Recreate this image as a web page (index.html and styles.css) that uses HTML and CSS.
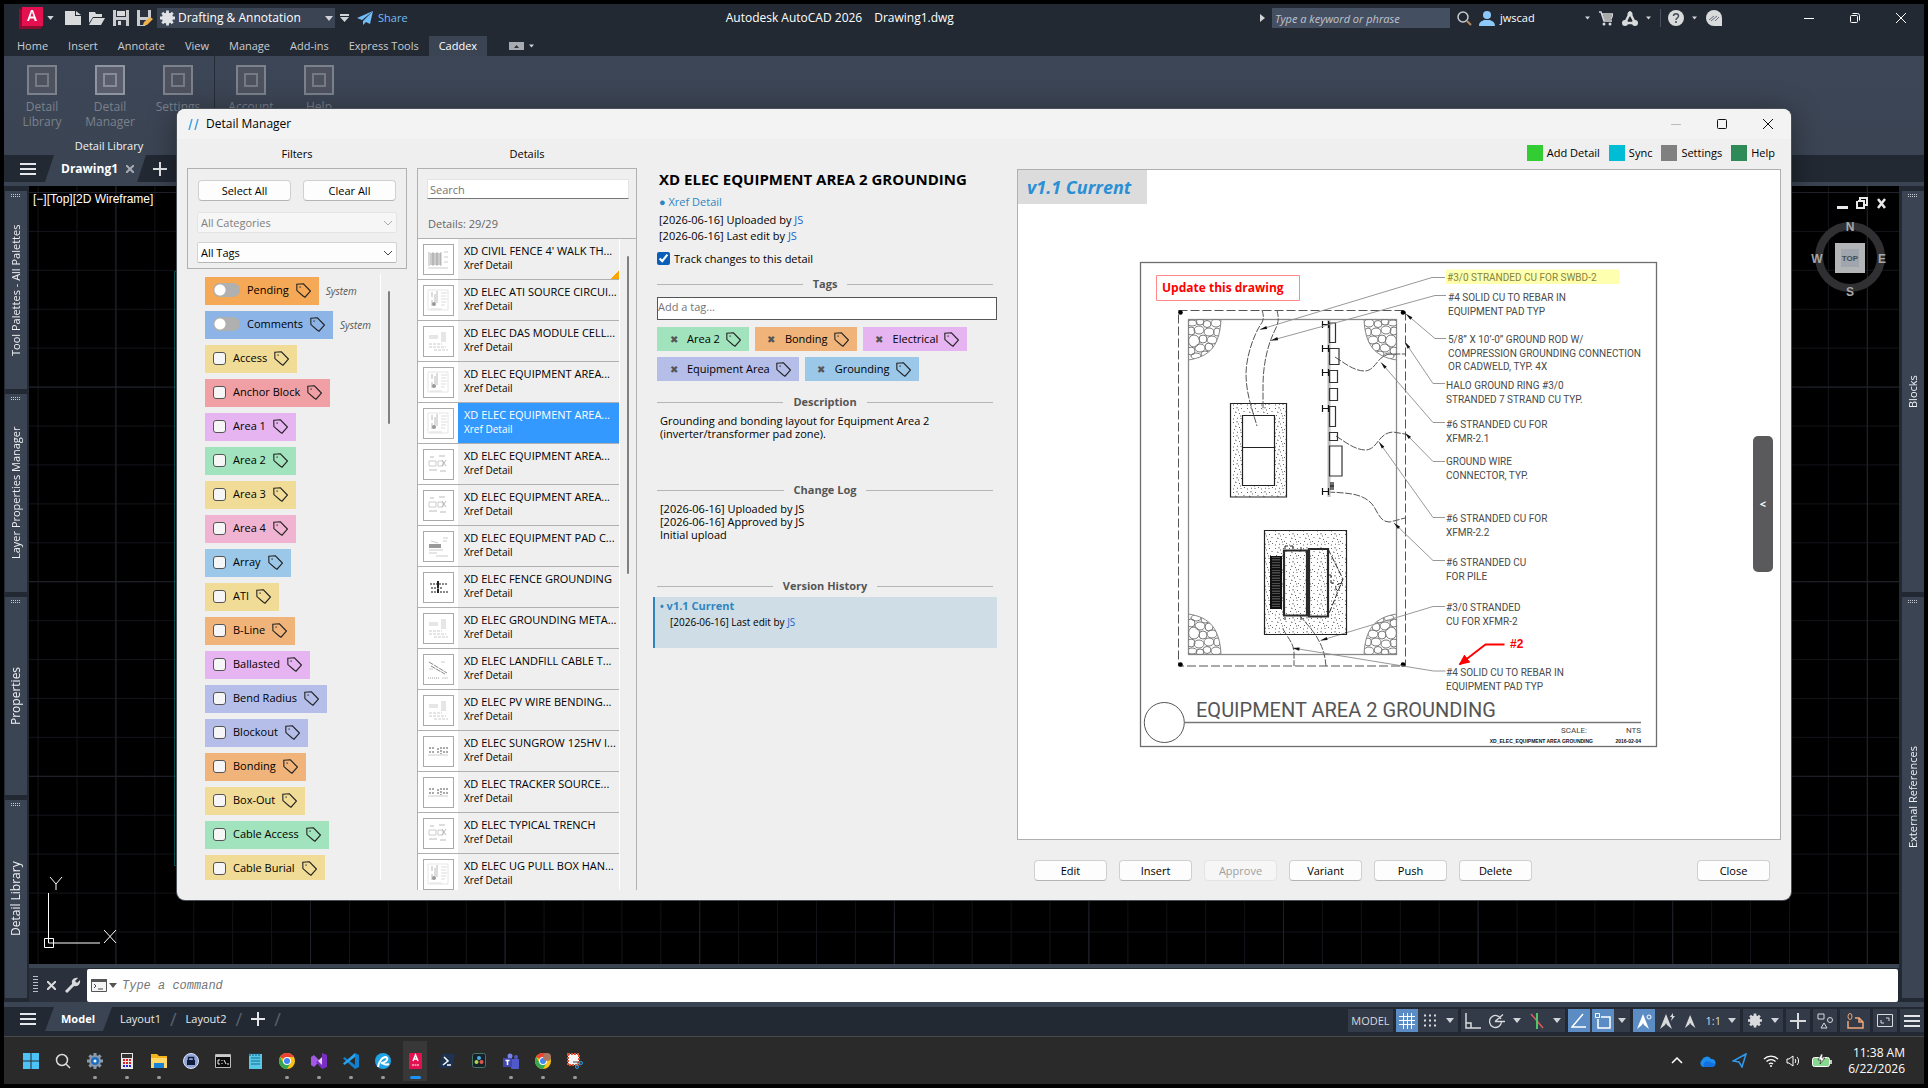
FILE: index.html
```html
<!DOCTYPE html>
<html lang="en">
<head>
<meta charset="utf-8">
<title>Autodesk AutoCAD 2026 - Drawing1.dwg</title>
<link rel="stylesheet" href="styles.css">
</head>
<body>
<svg class="defs" aria-hidden="true">
  <defs>
    <symbol id="tag" viewBox="0 0 15 15"><path d="M.8 1.2 7.4.8l7 7.2L9 14.2l-2.200-1.500L.9 7.600z" fill="none" stroke="#222" stroke-width="1.100"/><rect x="3.500" y="3.500" width="1.200" height="1.200" fill="#222"/></symbol>
    <symbol id="caret" viewBox="0 0 8 5"><path d="M0 0h8L4 5z" fill="#d0d3d8"/></symbol>
    <symbol id="menu" viewBox="0 0 16 12"><path d="M0 1h16M0 6h16M0 11h16" stroke="#e4e6e9" stroke-width="2"/></symbol>
    <symbol id="plus" viewBox="0 0 14 14"><path d="M7 0v14M0 7h14" stroke="#e4e6e9" stroke-width="2"/></symbol>
    <symbol id="gear" viewBox="0 0 16 16"><path d="M8 0v16M0 8h16M2.400 2.400l11.200 11.200M13.600 2.400 2.400 13.600" stroke="currentColor" stroke-width="3"/><circle cx="8" cy="8" r="4" fill="none" stroke="currentColor" stroke-width="4"/></symbol>
    <symbol id="chev" viewBox="0 0 10 6"><path d="m1 1 4 4 4-4" fill="none" stroke="currentColor"/></symbol>
    <symbol id="slot" viewBox="0 0 30 30"><rect x="1" y="1" width="28" height="28" fill="#4e525e" stroke="#7c818c" stroke-width="2"/><rect x="9" y="9" width="12" height="12" fill="none" stroke="#757a85" stroke-width="2"/></symbol>
    <symbol id="chrome" viewBox="0 0 16 16"><circle cx="8" cy="8" r="8" fill="#fbc116"/><path d="M8 8 1.100 4A8 8 0 0 1 15 4H8z" fill="#ea4335"/><path d="M8 8 4.500 10 1.100 4A8 8 0 0 0 8 16l3.500-6z" fill="#34a853"/><circle cx="8" cy="8" r="4" fill="#fff"/><circle cx="8" cy="8" r="3" fill="#4285f4"/></symbol>
    <symbol id="compass" viewBox="0 0 16 16"><path d="m7 1 6 15-5-4-1-2-1 2-5 4z" fill="currentColor"/></symbol>
    <symbol id="t-plan" viewBox="0 0 29 29"><path d="M4 4h20v20H4z" fill="none" stroke="#e6e6e6"/><path d="M8 6v5M13 5v12M8 14v6M11 8v8" stroke="#bbb"/><circle cx="10" cy="18" r="2" fill="#999"/><path d="M17 7h6M17 10h5M17 13h6M17 16h5M17 19h4M6 23h12" stroke="#ddd"/></symbol>
    <symbol id="t-block" viewBox="0 0 29 29"><path d="M6 8h11v12H6z" fill="#ccc"/><path d="M5 7v14M9 7v14M13 7v14M17 7v14" stroke="#888" stroke-width=".6"/><path d="M20 7h4M20 12h4M20 17h4M4 23h20" stroke="#ccc"/></symbol>
    <symbol id="t-notes" viewBox="0 0 29 29"><path d="M5 8h9v4H5zM17 5h5v10h-5z" fill="#e6e6e6"/><path d="M5 17h13M5 20h17M10 23h14" stroke="#ccc" stroke-dasharray="3 1"/></symbol>
    <symbol id="t-parts" viewBox="0 0 29 29"><path d="M5 11h7v5H5zM14 11h5v5h-5z" fill="none" stroke="#ccc"/><path d="m18 10 4 6m-4 0 4-6M6 7h4M15 6h6M5 20h8M16 21h6" stroke="#aaa" stroke-width=".8"/></symbol>
    <symbol id="t-dark" viewBox="0 0 29 29"><path d="M6 11h18M7 15h12M7 19h7M16 19h8" stroke="#888" stroke-width="2" stroke-dasharray="2 1"/><path d="M14 8v7M14 16v4" stroke="#222" stroke-width="2"/></symbol>
    <symbol id="t-diag" viewBox="0 0 29 29"><path d="m5 7 18 11M7 11l14 8" stroke="#888" stroke-dasharray="5 1"/><path d="M4 23h11" stroke="#999" stroke-dasharray="1 1"/><path d="M17 7h4M5 14h4M18 23h6" stroke="#ccc"/></symbol>
    <symbol id="t-row" viewBox="0 0 29 29"><path d="M5 11h6M5 15h6M14 11v6M17 10v7M19 11h5M19 15h5" stroke="#aaa" stroke-width="2" stroke-dasharray="2 1"/><path d="M4 18h20" stroke="#ccc"/></symbol>
    <symbol id="t-pad" viewBox="0 0 29 29"><path d="M5 12h12v4H5z" fill="#999"/><path d="M7 9l7 2M19 6h5M19 9h4M5 18h14M5 21h8M12 24h12" stroke="#ccc"/></symbol>
  </defs>
</svg>

<header class="titlebar">
  <button class="logo" aria-label="Application menu"><svg width="24" height="22" viewBox="0 0 24 22"><path d="M3 3 0 1v21h21l3-3z" fill="#8c0d30"/><path d="M3 0h21v19H3z" fill="#e51050"/><path d="m8 14 4-11h2l4 11h-2.300l-.8-2.500h-4L10 14zm3.500-4.500h3L13 5z" fill="#fff"/></svg></button>
  <svg class="caret" width="7" height="4"><use href="#caret"/></svg>
  <div class="quick">
    <button aria-label="New"><svg width="16" height="14"><path d="M0 0h10v5h6v9H0zM11 0l5 4h-5z" fill="#d9dadc"/></svg></button>
    <button aria-label="Open"><svg width="16" height="14"><path d="M0 1h6l1 2h6v3H4L0 12z" fill="#d9dadc"/><path d="M4 7h12l-4 7H0z" fill="#d9dadc"/></svg></button>
    <button aria-label="Save"><svg width="16" height="16"><path d="M0 0h16v16H0z" fill="#c9cbcf"/><path d="M3 0h10v7H3zM3 10h10v6H3z" fill="#2b323d"/><path d="M4 1h8v5H4zM5 11h3v4H5z" fill="#d9dadc"/></svg></button>
    <button aria-label="Save as"><svg width="16" height="16"><path d="M0 0h14v9l-6 7H0z" fill="#c9cbcf"/><path d="M3 0h8v7H3zM3 10h6v5H3z" fill="#2b323d"/><path d="m6 15 1-3 6-5 3 2-6 6z" fill="#f0b44c"/></svg></button>
  </div>
  <label class="workspace"><svg width="15" height="16"><use href="#gear"/></svg>
    <select aria-label="Workspace"><option>Drafting &amp; Annotation</option></select>
    <svg width="8" height="5"><use href="#caret"/></svg></label>
  <svg class="more" width="9" height="8"><path d="M0 0h9v2H0zM0 3h9L4.500 8z" fill="#d0d3d8"/></svg>
  <a class="share" href="#share"><svg width="16" height="14"><path d="M16 0 0 7l5 2zM16 0 6 10v4l3-3 4 2z" fill="#73bdf7"/></svg>Share</a>
  <h1 class="app-title"><span>Autodesk AutoCAD 2026</span><span>Drawing1.dwg</span></h1>
  <div class="title-right">
    <svg width="5" height="8"><path d="M0 0v8l5-4z" fill="#d0d3d8"/></svg>
    <input class="keyword" type="text" placeholder="Type a keyword or phrase" aria-label="Search help">
    <svg class="mag" width="15" height="15"><circle cx="6" cy="6" r="5" fill="none" stroke="#c9cbcf" stroke-width="1.500"/><path d="m10 10 4 4" stroke="#b98a5e" stroke-width="2"/></svg>
    <button class="user"><svg width="16" height="15"><circle cx="8" cy="4" r="4" fill="#8cc8fb"/><path d="M0 15c0-5 4-5 5-6h6c1 1 5 1 5 6z" fill="#8cc8fb"/></svg>jwscad <svg class="push" width="5" height="4"><use href="#caret"/></svg></button>
    <button aria-label="Store"><svg width="14" height="15"><path d="M0 1h2l3 9h8M3 3h11l-2 5H5z" fill="none" stroke="#d9dadc" stroke-width="1.500"/><path d="M4 3h9l-1 5H5z" fill="#aaa"/><circle cx="5" cy="13" r="1.500" fill="#d9dadc"/><circle cx="11" cy="13" r="1.500" fill="#d9dadc"/></svg></button>
    <button aria-label="Autodesk apps"><svg width="16" height="15"><path d="M8 2 3 12h10z" fill="none" stroke="#d9dadc" stroke-width="2.500"/><circle cx="3" cy="12" r="3" fill="#d9dadc"/><circle cx="13" cy="12" r="3" fill="#d9dadc"/><circle cx="8" cy="3" r="2.500" fill="#d9dadc"/></svg><svg class="cc" width="5" height="4"><use href="#caret"/></svg></button>
    <i class="sep"></i>
    <button aria-label="Help"><svg width="16" height="16"><circle cx="8" cy="8" r="8" fill="#d9dadc"/><path d="M5.500 6c0-3 5-3 5 0 0 2-2.500 2-2.500 4M8 11v2" fill="none" stroke="#444c59" stroke-width="1.500"/></svg><svg class="cc" width="5" height="4"><use href="#caret"/></svg></button>
    <button aria-label="Feedback"><svg width="16" height="16"><path d="M8 0a8 8 0 0 0 0 16h8V8a8 8 0 0 0-8-8z" fill="#d9dadc"/><path d="m3 10 5-4m-3 5 6-5m-2 5 4-4" stroke="#666d78"/></svg></button>
  </div>
  <div class="winctl">
    <button aria-label="Minimize"><svg width="10" height="10"><path d="M0 5.500h10" stroke="#fff"/></svg></button>
    <button aria-label="Restore"><svg width="10" height="10"><rect x=".5" y="2.500" width="7" height="7" rx="1" fill="none" stroke="#fff"/><path d="M2.500.5h5a2 2 0 0 1 2 2v5" fill="none" stroke="#fff"/></svg></button>
    <button aria-label="Close"><svg width="10" height="10"><path d="m0 0 10 10M10 0 0 10" stroke="#fff"/></svg></button>
  </div>
</header>

<nav class="tabs">
  <a href="#home">Home</a><a href="#insert">Insert</a><a href="#annotate">Annotate</a><a href="#view">View</a><a href="#manage">Manage</a><a href="#addins">Add-ins</a><a href="#express">Express Tools</a><a class="on" href="#caddex">Caddex</a>
  <button class="ribmin" aria-label="Minimize ribbon"><svg width="15" height="8"><path d="M0 0h15v8H0z" fill="#a9abb2"/><path d="M5 6h5L7.500 3z" fill="#333"/></svg><svg width="5" height="4"><use href="#caret"/></svg></button>
</nav>

<section class="ribbon">
  <div class="panel">
    <div class="tools">
      <button><svg width="30" height="30"><use href="#slot"/></svg>Detail<br>Library</button>
      <button><svg class="lit" width="30" height="30"><use href="#slot"/></svg>Detail<br>Manager</button>
      <button><svg width="30" height="30"><use href="#slot"/></svg>Settings</button>
    </div>
    <p>Detail Library</p>
  </div>
  <div class="panel second">
    <div class="tools">
      <button><svg width="30" height="30"><use href="#slot"/></svg>Account</button>
      <button><svg width="30" height="30"><use href="#slot"/></svg>Help</button>
    </div>
  </div>
</section>

<nav class="strip-tabs docs">
  <button aria-label="Menu"><svg width="16" height="12"><use href="#menu"/></svg></button>
  <a class="slant" href="#drawing1">Drawing1<svg width="8" height="8"><path d="m0 0 8 8M8 0 0 8" stroke="#a6abb4" stroke-width="2"/></svg></a>
  <button aria-label="New drawing"><svg width="14" height="14"><use href="#plus"/></svg></button>
</nav>

<main class="workarea">
  <aside class="palettes">
    <button>Tool Palettes - All Palettes</button><button>Layer Properties Manager</button><button>Properties</button><button>Detail Library</button>
  </aside>
  <div class="center">
    <div class="canvas">
      <svg class="grid" width="100%" height="100%">
        <defs>
          <pattern id="minor" x="8.600" y="6" width="38.920" height="38.920" patternUnits="userSpaceOnUse"><path d="M0 .5h39M.5 0v39" stroke="#13151a"/></pattern>
          <pattern id="major" x="86.400" y="6" width="194.600" height="194.600" patternUnits="userSpaceOnUse"><path d="M0 .5h195M.5 0v195" stroke="#20232e"/></pattern>
        </defs>
        <rect width="100%" height="100%" fill="url(#minor)"/><rect width="100%" height="100%" fill="url(#major)"/>
        <path d="M160 85.500h-14.500v594H160" fill="none" stroke="#066161"/>
      </svg>
      <p class="vp">[−][Top][2D Wireframe]</p>
      <svg class="ucs" width="74" height="74"><path d="M4.500 17v50H56M.5 62.500h9v9h-9z" fill="none" stroke="#fff"/><path d="m6 1 6 7 6-7M12 8v6M60 54l12 13M72 54 60 67" fill="none" stroke="#fff"/></svg>
      <svg class="cube" width="84" height="104">
        <path d="M22 14h11v3H22z" fill="#e8e8e8"/><path d="M43 9h6v7h-7V9M45 9V6h7v7h-3" fill="none" stroke="#e8e8e8" stroke-width="2"/><path d="m63 7 7 9m0-9-7 9" stroke="#e8e8e8" stroke-width="2.500"/>
        <circle cx="35" cy="65" r="31" fill="none" stroke="#303032" stroke-width="8"/>
        <path d="M20 51h30v30H20z" fill="#b3b4b6"/><path d="M26 57h18v18H26z" fill="#9fa6ad"/>
        <g class="cube-t"><text x="35" y="39">N</text><text x="35" y="104">S</text><text x="2" y="71">W</text><text x="67" y="71">E</text><text class="top" x="35" y="69">TOP</text></g>
      </svg>
    </div>
    <div class="cmd">
      <div class="cmd-tools"><i class="grip"></i>
        <button aria-label="Close command line"><svg width="9" height="9"><path d="m0 0 9 9M9 0 0 9" stroke="#d9dadc" stroke-width="2"/></svg></button>
        <button aria-label="Customize"><svg width="16" height="16"><path d="m1 15 8-8" stroke="#d9dadc" stroke-width="3"/><path d="M8 8C5 5 8 0 13 1l-3 3 2 2 3-3c1 5-4 8-7 5z" fill="#d9dadc"/></svg></button></div>
      <label class="cmd-line"><svg width="16" height="13"><path d="M.5.5h15v12H.5z" fill="#f4f4f4" stroke="#555"/><path d="M0 0h16v3H0z" fill="#555"/><path d="m3 5 2 2-2 2M7 10h5" fill="none" stroke="#444"/></svg><svg width="8" height="5"><path d="M0 0h8L4 5z" fill="#555"/></svg>
        <input type="text" placeholder="Type a command" aria-label="Command"></label>
    </div>
  </div>
  <aside class="palettes right"><button>Blocks</button><button>External References</button></aside>
</main>

<footer class="status">
  <nav class="strip-tabs">
    <button aria-label="Menu"><svg width="16" height="12"><use href="#menu"/></svg></button>
    <a class="slant" href="#model">Model</a><a href="#l1">Layout1</a><i>/</i><a href="#l2">Layout2</a><i>/</i>
    <button aria-label="New layout"><svg width="14" height="14"><use href="#plus"/></svg></button><i>/</i>
  </nav>
  <div class="modes">
    <div class="g"><button class="txt">MODEL</button></div>
    <div class="g">
      <button class="on" aria-label="Grid"><svg width="16" height="16"><path d="M4.500 0v16M8.500 0v16M12.500 0v16M0 3.500h16M0 7.500h16M0 11.500h16" stroke="#fff"/></svg></button>
      <button aria-label="Snap"><svg width="14" height="14"><path d="M1 1.500h13M1 6.500h13M1 11.500h13" stroke="#d9dadc" stroke-width="2" stroke-dasharray="2 3"/></svg></button>
      <button class="n" aria-label="Snap options"><svg width="8" height="5"><use href="#caret"/></svg></button></div>
    <div class="g">
      <button aria-label="Ortho"><svg width="16" height="16"><path d="M1 0v15h15M1 10h5v5" fill="none" stroke="#d9dadc" stroke-width="1.500"/></svg></button>
      <button aria-label="Polar"><svg width="16" height="16"><path d="M12 6A6 6 0 1 0 12.500 9M6 8.500h10M6 8.500l8-7" fill="none" stroke="#d9dadc" stroke-width="1.300"/></svg></button>
      <button class="n" aria-label="Polar options"><svg width="8" height="5"><use href="#caret"/></svg></button>
      <button aria-label="Isoplane"><svg width="14" height="16"><path d="m1 1 12 14" stroke="#e85858" stroke-width="1.500"/><path d="M7 0v16" stroke="#4fc46b" stroke-width="2"/></svg></button>
      <button class="n" aria-label="Isoplane options"><svg width="8" height="5"><use href="#caret"/></svg></button></div>
    <div class="g">
      <button class="on" aria-label="Object tracking"><svg width="16" height="16"><path d="M12 1 1 14h14" fill="none" stroke="#fff" stroke-width="1.500"/></svg></button>
      <button class="on gapped" aria-label="Object snap"><svg width="16" height="16"><path d="M6 4h9v11H3V6" fill="none" stroke="#fff" stroke-width="1.500"/><path d="M.5.5h4v4h-4z" fill="none" stroke="#fff"/></svg></button>
      <button class="n" aria-label="Snap modes"><svg width="8" height="5"><use href="#caret"/></svg></button></div>
    <div class="g">
      <button class="on" aria-label="Annotation visibility"><svg width="16" height="16"><use href="#compass"/><circle cx="13" cy="4" r="2" fill="none" stroke="#fff"/></svg></button>
      <button aria-label="Auto scale"><svg width="16" height="16"><use href="#compass"/><path d="m14 0-3 4h2l-1 4 4-5h-2z" fill="#d9dadc"/></svg></button>
      <button aria-label="Annotation scale"><svg width="14" height="16"><use href="#compass"/></svg></button>
      <button class="txt">1:1</button>
      <button class="n" aria-label="Scale list"><svg width="8" height="5"><use href="#caret"/></svg></button></div>
    <div class="g"><button aria-label="Workspace switching"><svg width="14" height="15"><use href="#gear"/></svg></button><button class="n" aria-label="Workspaces"><svg width="8" height="5"><use href="#caret"/></svg></button></div>
    <div class="g"><button aria-label="Annotation monitor"><svg width="16" height="16"><path d="M8 0v16M0 8h16" stroke="#d9dadc" stroke-width="2"/></svg></button></div>
    <div class="g"><button aria-label="Isolate objects"><svg width="16" height="16"><path d="M1 1h6v5H1zM4 15l3-5 3 5z" fill="none" stroke="#d9dadc"/><circle cx="13" cy="7" r="2.500" fill="none" stroke="#d9dadc"/></svg></button></div>
    <div class="g"><button class="wide" aria-label="Graphics"><svg width="17" height="16"><path d="M1 8v7h15V9l-4-4H8M12 5v4h4" fill="none" stroke="#f2a878" stroke-width="1.500"/><ellipse cx="3" cy="3.500" rx="2" ry="3" fill="none" stroke="#f2a878"/></svg></button></div>
    <div class="g"><button aria-label="Clean screen"><svg width="16" height="13"><path d="M.5.5h15v12H.5zM4 6v3h3M9 4h3v3" fill="none" stroke="#d9dadc"/></svg></button></div>
    <div class="g"><button aria-label="Customization"><svg width="16" height="12"><use href="#menu"/></svg></button></div>
  </div>
</footer>

<nav class="taskbar">
  <div class="apps">
    <button aria-label="Start"><svg width="16" height="16"><path d="M0 0h7.500v7.500H0zM8.500 0H16v7.500H8.500zM0 8.500h7.500V16H0zM8.500 8.500H16V16H8.500z" fill="#4cc2f8"/></svg></button>
    <button aria-label="Search"><svg width="16" height="16"><circle cx="7" cy="7" r="5.500" fill="none" stroke="#ddd" stroke-width="1.500"/><path d="m11 11 4 4" stroke="#ddd" stroke-width="1.500"/></svg></button>
    <button class="run gr" aria-label="Settings"><svg width="16" height="16"><use href="#gear"/><circle cx="8" cy="8" r="4" fill="#1a6fc0"/><circle cx="8" cy="8" r="1.500" fill="#fff"/></svg></button>
    <button class="run" aria-label="Calculator"><svg width="12" height="16"><path d="M0 0h12v16H0z" fill="#e8e8e8"/><path d="M1 1h10v4H1z" fill="#333"/><path d="M2 7h8M2 10h8" stroke="#d22" stroke-width="2" stroke-dasharray="2 1"/><path d="M2 13h8" stroke="#22d" stroke-width="2" stroke-dasharray="2 1"/></svg></button>
    <button class="run" aria-label="File Explorer"><svg width="16" height="16"><path d="M0 1h6l2 2h8v12H0z" fill="#f3b51c"/><path d="M0 5h16v10H0z" fill="#ffd869"/><path d="M3 10h10v5H3z" fill="#1683d8"/></svg></button>
    <button aria-label="Lock"><svg width="16" height="16"><circle cx="8" cy="8" r="7.500" fill="#8fa3d6" stroke="#dfe5f5"/><path d="M4 7h8v5H4z" fill="#111c3a"/><path d="M5.500 7V4.500h5V7" fill="none" stroke="#111c3a" stroke-width="1.500"/></svg></button>
    <button aria-label="Command Prompt"><svg width="16" height="14"><path d="M.5.5h15v13H.5z" fill="#0c0c0c" stroke="#bbb"/><path d="M1 1h14v2H1z" fill="#ccc"/><path d="M5 6H3v4h2M7 6v1M7 9v1M9 6l2 4M12 10h2" fill="none" stroke="#eee"/></svg></button>
    <button aria-label="Notepad"><svg width="13" height="16"><path d="M0 1h13v15H0z" fill="#58c6e6"/><path d="M2 5h9M2 8h9M2 11h9" stroke="#176f94"/><path d="M1 0v3M4 0v3M7 0v3M10 0v3" stroke="#0f5878"/></svg></button>
    <button class="run" aria-label="Chrome"><svg width="16" height="16"><use href="#chrome"/></svg></button>
    <button class="run" aria-label="Visual Studio"><svg width="16" height="16"><path d="m0 4 3-2 9 9V5L3 14l-3-2z" fill="#a259e6"/><path d="m11 0 5 2v12l-5 2-6-7 6-4z" fill="#7a2fc4"/><path d="m11 4-4 4 4 4z" fill="#e4c9fb"/></svg></button>
    <button class="run" aria-label="Code"><svg width="16" height="16"><path d="m12 0 4 2v12l-4 2L0 5.500 1.500 4 12 12z" fill="#1080cf"/><path d="M12 0v4L1.500 12 0 10.500z" fill="#2aa5f2"/></svg></button>
    <button class="run" aria-label="Recorder"><svg width="16" height="16"><circle cx="8" cy="8" r="8" fill="#20a4e6"/><path d="M3 14c1-5 3-9 7-10 4 0 3 5-4 6 3 0 4 3 8 1" fill="none" stroke="#fff" stroke-width="2"/></svg></button>
    <button class="run act" aria-label="AutoCAD"><svg width="13" height="16"><rect width="13" height="16" rx="1" fill="#e51050"/><path d="m4 8 2.500-6L9 8M5 6h3" fill="none" stroke="#fff" stroke-width="1.500"/><path d="M3 12h7" stroke="#fff" stroke-dasharray="2 .5"/></svg></button>
    <button aria-label="PowerShell"><svg width="16" height="14"><path d="M3 0h13l-3 14H0z" fill="#1e3350"/><path d="m5 3 4 4-5 4M8 11h4" fill="none" stroke="#fff" stroke-width="1.500"/></svg></button>
    <button aria-label="Resolve"><svg width="14" height="15"><rect x=".5" y=".5" width="13" height="14" rx="2" fill="#16212c" stroke="#447766"/><circle cx="7" cy="5" r="2" fill="#48b0e0"/><circle cx="4.500" cy="9" r="2" fill="#b5d34a"/><circle cx="9.500" cy="9" r="2" fill="#e0584a"/></svg></button>
    <button class="run" aria-label="Teams"><svg width="16" height="16"><circle cx="7" cy="3" r="2.500" fill="#7b83eb"/><circle cx="13" cy="4" r="2" fill="#5059c9"/><path d="M4 6h12v6a4 4 0 0 1-8 3z" fill="#5059c9"/><path d="M0 5h9v9H0z" fill="#4048b0"/><path d="M2.500 7.500h4M4.500 7.500V12" stroke="#fff" stroke-width="1.500"/></svg></button>
    <button class="run" aria-label="Chrome profile"><svg width="16" height="16"><use href="#chrome"/><circle cx="12" cy="4" r="4" fill="#a87860"/></svg></button>
    <button class="run" aria-label="Snipping Tool"><svg width="16" height="16"><rect x="1" y="1" width="11" height="11" fill="#f5f5f5" stroke="#e2502f" stroke-width="2" stroke-dasharray="2 1"/><path d="M6 9h5v3M11 11l3 3" fill="none" stroke="#444"/><circle cx="14" cy="10" r="1.500" fill="none" stroke="#2d9fe3"/><circle cx="10" cy="14" r="1.500" fill="none" stroke="#2d9fe3"/></svg></button>
  </div>
  <div class="tray">
    <svg width="12" height="7"><path d="m1 6 5-5 5 5" fill="none" stroke="#fff" stroke-width="1.500"/></svg>
    <svg width="17" height="12"><path d="M4 12a4 4 0 0 1-1-7 5 5 0 0 1 9-1 4 4 0 0 1 1 8z" fill="#1b8ef2"/><path d="M5 12a4 4 0 0 1 3-6l8 3a3 3 0 0 1-3 3z" fill="#1470dd"/></svg>
    <svg width="15" height="15"><path d="M14 1 1 8l6 1 3 5z" fill="none" stroke="#2e9bf0" stroke-width="1.500"/></svg>
    <svg width="16" height="12"><path d="M1 4a10 10 0 0 1 14 0M3.500 6.500a6.500 6.500 0 0 1 9 0M6 9a3 3 0 0 1 4 0" fill="none" stroke="#fff" stroke-width="1.300"/><circle cx="8" cy="11" r="1" fill="#fff"/></svg>
    <svg width="15" height="12"><path d="M1 4h2l4-3v10L3 8H1zM9 4c1 1 1 3 0 4M11 2c2 2 2 6 0 8" fill="none" stroke="#fff"/></svg>
    <svg width="20" height="13"><rect x=".5" y="3.500" width="17" height="9" rx="2" fill="#86d98e" stroke="#fff"/><path d="M19 6v4" stroke="#fff" stroke-width="1.500"/><path d="m9 0-3 6h3l-1 4 5-6h-3l1-4z" fill="#fff" stroke="#2a2a2a" stroke-width=".7"/></svg>
    <time>11:38 AM<br>6/22/2026</time>
  </div>
</nav>

<section class="dialog" role="dialog" aria-labelledby="dlg-title">
  <header class="dlg-head">
    <svg width="11" height="11"><path d="M4 0 1 11M10 0 7 11" stroke="#45a5e6" stroke-width="1.500"/></svg>
    <h2 id="dlg-title">Detail Manager</h2>
    <button aria-label="Minimize"><svg width="10" height="10"><path d="M0 5.500h10" stroke="#bbb"/></svg></button>
    <button aria-label="Maximize"><svg width="10" height="10"><rect x=".5" y=".5" width="9" height="9" rx="1" fill="none" stroke="#111"/></svg></button>
    <button aria-label="Close"><svg width="10" height="10"><path d="m0 0 10 10M10 0 0 10" stroke="#111"/></svg></button>
  </header>
  <div class="dlg-body">
    <section class="filters">
      <h3>Filters</h3>
      <div class="box">
        <div class="pair"><button class="btn">Select All</button><button class="btn">Clear All</button></div>
        <label class="combo off"><select disabled aria-label="Category"><option>All Categories</option></select><svg width="10" height="6"><use href="#chev"/></svg></label>
        <label class="combo"><select aria-label="Tag group"><option>All Tags</option></select><svg width="10" height="6"><use href="#chev"/></svg></label>
      </div>
      <div class="taglist">
        <div class="tags">
          <div class="sys"><label class="tag c-amber"><input class="switch" type="checkbox">Pending<svg><use href="#tag"/></svg></label><em>System</em></div>
          <div class="sys"><label class="tag c-blue"><input class="switch" type="checkbox">Comments<svg><use href="#tag"/></svg></label><em>System</em></div>
          <label class="tag c-yellow"><input type="checkbox">Access<svg><use href="#tag"/></svg></label>
          <label class="tag c-red"><input type="checkbox">Anchor Block<svg><use href="#tag"/></svg></label>
          <label class="tag c-violet"><input type="checkbox">Area 1<svg><use href="#tag"/></svg></label>
          <label class="tag c-green"><input type="checkbox">Area 2<svg><use href="#tag"/></svg></label>
          <label class="tag c-yellow"><input type="checkbox">Area 3<svg><use href="#tag"/></svg></label>
          <label class="tag c-pink"><input type="checkbox">Area 4<svg><use href="#tag"/></svg></label>
          <label class="tag c-sky"><input type="checkbox">Array<svg><use href="#tag"/></svg></label>
          <label class="tag c-yellow"><input type="checkbox">ATI<svg><use href="#tag"/></svg></label>
          <label class="tag c-orange"><input type="checkbox">B-Line<svg><use href="#tag"/></svg></label>
          <label class="tag c-violet"><input type="checkbox">Ballasted<svg><use href="#tag"/></svg></label>
          <label class="tag c-indigo"><input type="checkbox">Bend Radius<svg><use href="#tag"/></svg></label>
          <label class="tag c-indigo"><input type="checkbox">Blockout<svg><use href="#tag"/></svg></label>
          <label class="tag c-orange"><input type="checkbox">Bonding<svg><use href="#tag"/></svg></label>
          <label class="tag c-yellow"><input type="checkbox">Box-Out<svg><use href="#tag"/></svg></label>
          <label class="tag c-green"><input type="checkbox">Cable Access<svg><use href="#tag"/></svg></label>
          <label class="tag c-yellow"><input type="checkbox">Cable Burial<svg><use href="#tag"/></svg></label>
        </div>
        <i class="bar"></i>
      </div>
    </section>

    <section class="details">
      <h3>Details</h3>
      <div class="box">
        <input type="search" placeholder="Search" aria-label="Search details">
        <p>Details: 29/29</p>
      </div>
      <div class="rows">
        <ul>
          <li class="flag"><svg><use href="#t-block"/></svg><a href="#d1"><b>XD CIVIL FENCE 4' WALK TH...</b>Xref Detail</a></li>
          <li><svg><use href="#t-plan"/></svg><a href="#d2"><b>XD ELEC ATI SOURCE CIRCUI...</b>Xref Detail</a></li>
          <li><svg><use href="#t-notes"/></svg><a href="#d3"><b>XD ELEC DAS MODULE CELL...</b>Xref Detail</a></li>
          <li><svg><use href="#t-plan"/></svg><a href="#d4"><b>XD ELEC EQUIPMENT AREA...</b>Xref Detail</a></li>
          <li class="sel"><svg><use href="#t-plan"/></svg><a href="#d5"><b>XD ELEC EQUIPMENT AREA...</b>Xref Detail</a></li>
          <li><svg><use href="#t-parts"/></svg><a href="#d6"><b>XD ELEC EQUIPMENT AREA...</b>Xref Detail</a></li>
          <li><svg><use href="#t-parts"/></svg><a href="#d7"><b>XD ELEC EQUIPMENT AREA...</b>Xref Detail</a></li>
          <li><svg><use href="#t-pad"/></svg><a href="#d8"><b>XD ELEC EQUIPMENT PAD C...</b>Xref Detail</a></li>
          <li><svg><use href="#t-dark"/></svg><a href="#d9"><b>XD ELEC FENCE GROUNDING</b>Xref Detail</a></li>
          <li><svg><use href="#t-notes"/></svg><a href="#d10"><b>XD ELEC GROUNDING META...</b>Xref Detail</a></li>
          <li><svg><use href="#t-diag"/></svg><a href="#d11"><b>XD ELEC LANDFILL CABLE T...</b>Xref Detail</a></li>
          <li><svg><use href="#t-notes"/></svg><a href="#d12"><b>XD ELEC PV WIRE BENDING...</b>Xref Detail</a></li>
          <li><svg><use href="#t-row"/></svg><a href="#d13"><b>XD ELEC SUNGROW 125HV I...</b>Xref Detail</a></li>
          <li><svg><use href="#t-row"/></svg><a href="#d14"><b>XD ELEC TRACKER SOURCE...</b>Xref Detail</a></li>
          <li><svg><use href="#t-parts"/></svg><a href="#d15"><b>XD ELEC TYPICAL TRENCH</b>Xref Detail</a></li>
          <li><svg><use href="#t-plan"/></svg><a href="#d16"><b>XD ELEC UG PULL BOX HAN...</b>Xref Detail</a></li>
        </ul>
        <i class="bar"></i>
      </div>
    </section>

    <section class="info">
      <h2>XD ELEC EQUIPMENT AREA 2 GROUNDING</h2>
      <p class="kind">● <span>Xref Detail</span></p>
      <p class="by">[2026-06-16] Uploaded by <a href="#js">JS</a></p>
      <p class="by">[2026-06-16] Last edit by <a href="#js">JS</a></p>
      <label class="track"><input type="checkbox" checked>Track changes to this detail</label>
      <h3>Tags</h3>
      <input class="add" type="text" placeholder="Add a tag..." aria-label="Add a tag">
      <div class="chips">
        <span class="chip c-green"><button aria-label="Remove Area 2">✖</button>Area 2<svg><use href="#tag"/></svg></span>
        <span class="chip c-orange"><button aria-label="Remove Bonding">✖</button>Bonding<svg><use href="#tag"/></svg></span>
        <span class="chip c-violet"><button aria-label="Remove Electrical">✖</button>Electrical<svg><use href="#tag"/></svg></span>
        <span class="chip c-indigo"><button aria-label="Remove Equipment Area">✖</button>Equipment Area<svg><use href="#tag"/></svg></span>
        <span class="chip c-sky"><button aria-label="Remove Grounding">✖</button>Grounding<svg><use href="#tag"/></svg></span>
      </div>
      <h3 class="far">Description</h3>
      <p class="desc">Grounding and bonding layout for Equipment Area 2<br>(inverter/transformer pad zone).</p>
      <h3 class="flush">Change Log</h3>
      <p class="log">[2026-06-16] Uploaded by JS<br>[2026-06-16] Approved by JS<br>Initial upload</p>
      <h3 class="flush">Version History</h3>
      <div class="version"><b><small>•</small> v1.1 Current</b><p>[2026-06-16] Last edit by <a href="#js">JS</a></p></div>
    </section>

    <section class="view">
      <nav class="toolbar">
        <button><i class="s1"></i>Add Detail</button><button><i class="s2"></i>Sync</button><button><i class="s3"></i>Settings</button><button><i class="s4"></i>Help</button>
      </nav>
      <div class="preview">
        <span class="badge">v1.1 Current</span>
        <svg class="sheet" viewBox="1018 170 762 669" role="img" aria-label="Equipment Area 2 Grounding drawing">
          <defs>
            <marker id="ar" markerUnits="userSpaceOnUse" markerWidth="8" markerHeight="4" refX="0" refY="2" orient="auto"><path d="M0 2 7 .4v3.200z" fill="#111"/></marker>
            <marker id="rd" markerUnits="userSpaceOnUse" markerWidth="12" markerHeight="10" refX="10" refY="5" orient="auto"><path d="M11 5 0 0v10z" fill="#f00"/></marker>
            <pattern id="grit" width="14" height="14" patternUnits="userSpaceOnUse"><path d="M1 2l1 1M5 1v1.500M9 3l1-1M12 5v1M3 6l1.500.5M7 7l1 1M11 9l-1 1M2 10l1-1M5 12l1 .5M9 13v-1M13 12l-1-1M6 4h1M1 13h1M8 10h1" stroke="#555" stroke-width=".9"/></pattern>
            <symbol id="stones" viewBox="0 0 34 42" overflow="visible">
              <clipPath id="fan"><path d="M0 0h33C32 26 22 38 0 41z"/></clipPath>
              <g fill="none" stroke="#7a7a7a" clip-path="url(#fan)">
                <ellipse cx="4" cy="4" rx="5" ry="3"/><ellipse cx="12" cy="3" rx="4" ry="3"/><ellipse cx="19" cy="5" rx="4" ry="3.500"/><ellipse cx="28" cy="4" rx="5" ry="4"/><ellipse cx="3" cy="12" rx="4" ry="4"/><ellipse cx="11" cy="11" rx="5" ry="4"/><ellipse cx="21" cy="13" rx="5" ry="4"/><ellipse cx="29" cy="13" rx="3.500" ry="4"/><ellipse cx="6" cy="22" rx="5.500" ry="6"/><ellipse cx="15" cy="20" rx="4" ry="4"/><ellipse cx="24" cy="21" rx="5" ry="4"/><ellipse cx="3" cy="32" rx="4" ry="4"/><ellipse cx="12" cy="29" rx="5" ry="4"/><ellipse cx="21" cy="28" rx="4" ry="4"/><ellipse cx="8" cy="37" rx="5" ry="3"/><ellipse cx="17" cy="35" rx="4" ry="3"/></g>
              <path d="M33 0C32 26 22 38 0 41" fill="none" stroke="#888"/>
            </symbol>
          </defs>
          <rect x="1140.500" y="262.500" width="516" height="484" fill="none" stroke="#6e6e6e" stroke-width="1.300"/>
          <rect x="1188.500" y="319.500" width="208" height="335" fill="none" stroke="#8a8a8a" stroke-width="1.300"/>
          <rect x="1178.500" y="310.500" width="227" height="355.500" fill="none" stroke="#555" stroke-dasharray="9 3"/>
          <g><circle cx="1180.500" cy="312.500" r="2.300"/><circle cx="1403" cy="312.500" r="2.300"/><circle cx="1180.500" cy="664.500" r="2.300"/><circle cx="1403" cy="664.500" r="2.300"/></g>
          <use href="#stones" width="34" height="42" transform="translate(1188 319)"/>
          <use href="#stones" width="34" height="42" transform="translate(1397 319) scale(-1 1)"/>
          <use href="#stones" width="34" height="42" transform="translate(1188 655) scale(1 -1)"/>
          <use href="#stones" width="34" height="42" transform="translate(1397 655) scale(-1 -1)"/>
          <path d="M1230.500 403.500h56V497h-56z" fill="url(#grit)" stroke="#222" stroke-width="1.200"/>
          <path d="M1242.500 415.500h32v70h-32zM1242.500 447.500h32" fill="#fff" stroke="#222" stroke-width="1.200"/>
          <path d="M1262 310c1 4 3 8-1 14-8 12-15 34-15 50 0 20 7 38 11 52M1277 310c1 6 3 10-2 20-8 16-12 36-12 56v24M1335 357c12 8 20 14 30 14 12-1 12-17 27-17h13M1336 436c12 8 20 14 30 14 12-1 12-17 27-18l12 2M1328 492c18 1 32 1 42 10 8 7 8 20 20 20l15-4M1283 629c5 9 10 14 11 22v15M1300 616c10 12 24 24 26 50" fill="none" stroke="#555" stroke-dasharray="7 1.500"/>
          <path d="M1329 320v177" stroke="#bdbdbd" stroke-width="3"/>
          <path d="M1329.500 323h6v19.500h-6zM1329.500 348.500h9.500v16h-9.500zM1329.500 370.500h8v12h-8zM1329.500 388.500h8v12h-8zM1329.500 406.500h6v20h-6zM1329.500 432.500h8v8h-8zM1329.500 446h12.500v30h-12.500z" fill="none" stroke="#333" stroke-width="1.200"/>
          <path d="M1322.500 321v7M1323 324.500h6M1322.500 345v7M1323 348.500h6M1322.500 369v7M1323 372.500h6M1322.500 405v7M1323 408.500h6M1322.500 488v7M1323 491.500h6M1328.500 321v7M1328.500 345v7M1328.500 369v7M1328.500 405v7M1328.500 488v7M1331 482v8M1333 482v8M1330 486h4" stroke="#111" stroke-width="1.200"/>
          <g fill="none" stroke="#8c8c8c" stroke-width=".9">
            <path marker-start="url(#ar)" d="m1260 329.500 172-52h13"/><path marker-start="url(#ar)" d="m1271 340.500 164-45h11"/><path marker-start="url(#ar)" d="m1406 314 29 24.500h11"/><path marker-start="url(#ar)" d="m1405 342 28 41.500h12"/><path marker-start="url(#ar)" d="m1381 362.500 52 60h12"/><path marker-start="url(#ar)" d="m1405 433 28 28.500h12"/><path marker-start="url(#ar)" d="m1379 442 54 75.500h12"/><path marker-start="url(#ar)" d="m1394 523 39 37.500h12"/><path marker-start="url(#ar)" d="m1320.500 640.500 112.500-34h12"/><path marker-start="url(#ar)" d="m1292.500 648 141 23h12"/>
          </g>
          <path d="M1264.500 530.500h82v104h-82z" fill="url(#grit)" stroke="#222" stroke-width="1.200"/>
          <path d="M1270 556h12v53h-12z" fill="#111"/><path d="M1276 557v51" stroke="#888" stroke-width="8" stroke-dasharray=".6 2"/>
          <path d="M1284 550.500h23v65h-23zM1309 549h19v67.500h-19z" fill="none" stroke="#2a2a2a" stroke-width="2.200"/>
          <path d="m1328 549 15 30-15 37M1328 575h3v8h4M1343 584c-6-2-10 4-5 7M1285 549v-3h8v3M1301 547v4M1285 617v3M1301 617v3" fill="none" stroke="#222" stroke-dasharray="6 2"/>
          <path d="M1504.500 644.500h-19l-26 20" fill="none" stroke="#f00" stroke-width="1.800" marker-end="url(#rd)"/>
          <path d="M1446 269.500h173.500V284H1446z" fill="#ffffb0"/>
          <path d="M1156.500 275.500h143v25h-143z" fill="#fff" stroke="#f88"/>
          <text class="note" x="1162" y="292">Update this drawing</text>
          <text class="num" x="1510" y="648">#2</text>
          <g class="cad">
            <text class="hl" x="1447" y="281">#3/0 STRANDED CU FOR SWBD-2</text>
            <text x="1448" y="301">#4 SOLID CU TO REBAR IN</text><text x="1448" y="315">EQUIPMENT PAD TYP</text>
            <text x="1448" y="343">5/8” X 10’-0” GROUND ROD W/</text><text x="1448" y="357">COMPRESSION GROUNDING CONNECTION</text><text x="1448" y="370">OR CADWELD, TYP. 4X</text>
            <text x="1446" y="389">HALO GROUND RING #3/0</text><text x="1446" y="403">STRANDED 7 STRAND CU TYP.</text>
            <text x="1446" y="428">#6 STRANDED CU FOR</text><text x="1446" y="442">XFMR-2.1</text>
            <text x="1446" y="465">GROUND WIRE</text><text x="1446" y="479">CONNECTOR, TYP.</text>
            <text x="1446" y="522">#6 STRANDED CU FOR</text><text x="1446" y="536">XFMR-2.2</text>
            <text x="1446" y="566">#6 STRANDED CU</text><text x="1446" y="580">FOR PILE</text>
            <text x="1446" y="611">#3/0 STRANDED</text><text x="1446" y="625">CU FOR XFMR-2</text>
            <text x="1446" y="676">#4 SOLID CU TO REBAR IN</text><text x="1446" y="690">EQUIPMENT PAD TYP</text>
          </g>
          <ellipse cx="1164.300" cy="722.500" rx="20" ry="20" fill="none" stroke="#555"/>
          <path d="M1184 722.500h457" stroke="#777" stroke-width="1.300"/>
          <text class="name" x="1196" y="717">EQUIPMENT AREA 2 GROUNDING</text>
          <text class="scale" x="1561" y="733">SCALE:</text><text class="scale" x="1641" y="733" text-anchor="end">NTS</text>
          <text class="tiny" x="1593" y="743" text-anchor="end">XD_ELEC_EQUIPMENT AREA GROUNDING</text><text class="tiny" x="1641" y="743" text-anchor="end">2016-02-04</text>
        </svg>
        <button class="handle" aria-label="Expand panel">&lt;</button>
      </div>
      <div class="actions">
        <button class="btn">Edit</button><button class="btn">Insert</button><button class="btn" disabled>Approve</button><button class="btn">Variant</button><button class="btn">Push</button><button class="btn">Delete</button><button class="btn close">Close</button>
      </div>
    </section>
  </div>
</section>
</body>
</html>
```
FILE: styles.css
```css
* { box-sizing: border-box; }
body {
  margin: 0; padding: 4px; min-height: 100vh; background: #000; color: #e8eaed;
  display: flex; flex-direction: column; position: relative;
  font: 12px/16px "Open Sans", "Noto Sans", sans-serif;
}
h1, h2, h3, p, ul { margin: 0; padding: 0; font-size: inherit; font-weight: inherit; }
ul { list-style: none; }
i { font-style: normal; }
a { color: inherit; text-decoration: none; }
button, input, select { font: inherit; color: inherit; margin: 0; }
button { background: none; border: 0; padding: 0; }
svg { display: block; flex: none; }
.defs { position: absolute; width: 0; height: 0; }

/* title bar */
.titlebar { height: 32px; background: #222933; display: flex; align-items: center; padding: 0 18px 4px 15px; }
.titlebar > .caret { margin: 0 11px 0 4px; }
.quick { display: flex; gap: 8px; align-items: center; }
.workspace { margin-left: 4px; width: 178px; height: 20px; background: #3b4453; display: flex; align-items: center; padding: 0 2px 0 3px; gap: 3px; color: #e0e2e5; }
.workspace select { flex: 1; min-width: 0; appearance: none; background: none; border: 0; padding: 0; color: #fff; }
.more { margin: 0 8px 0 5px; }
.share { display: flex; gap: 5px; align-items: center; color: #73bdf7; font-size: 11px; }
.app-title { flex: 1; display: flex; justify-content: center; gap: 12px; color: #fff; margin-left: 12px; }
.title-right { display: flex; align-items: center; gap: 7px; }
.title-right button { display: flex; align-items: center; gap: 5px; }
.keyword { width: 178px; height: 20px; background: #454f62; border: 0; padding: 0 3px; font-style: italic; font-size: 11px; }
.keyword::placeholder { color: #c0c4cb; }
.title-right .user { width: 111px; color: #fff; font-size: 11px; }
.title-right .push { margin-left: auto; }
.title-right button + button { margin-left: 2px; }
.sep { width: 1px; height: 18px; background: #4a5262; margin-left: 2px; }
.cc { margin-left: 3px; }
.winctl { display: flex; gap: 36px; margin-left: 82px; }

.tabs { height: 20px; background: #222933; display: flex; padding-left: 3px; color: #c9ccd2; font-size: 11px; }
.tabs a { padding: 2px 10px; }
.tabs .on { background: #3b4453; color: #fff; }
.ribmin { display: flex; align-items: center; gap: 5px; margin-left: 22px; }

.ribbon { height: 99px; background: linear-gradient(#3d4656, #3b4453); display: flex; color: #7b818c; }
.panel { width: 211px; display: flex; flex-direction: column; border-right: 1px solid #252c38; }
.panel.second { border: 0; }
.tools { display: flex; padding: 9px 0 0 4px; height: 82px; }
.second .tools { padding-left: 2px; }
.tools button { width: 68px; display: flex; flex-direction: column; align-items: center; line-height: 15px; }
.tools button svg { margin-bottom: 4px; }
.tools .lit { filter: brightness(1.15); }
.panel p { text-align: center; color: #f0f1f3; font-size: 11px; }

.strip-tabs { display: flex; align-items: center; background: #222933; padding-left: 16px; color: #e8eaed; font-size: 11px; }
.docs { height: 31px; border-bottom: 4px solid #3b4453; font-size: 12px; }
.slant { background: #3b4453; clip-path: polygon(9px 0, 100% 0, calc(100% - 9px) 100%, 0 100%); align-self: stretch; display: flex; align-items: center; padding: 0 17px 0 16px; margin: 0 9px; font-weight: 700; color: #fff; }
.slant svg { margin-left: 8px; }
.docs .slant { padding-right: 12px; margin-right: 7px; }

/* work area */
.workarea { flex: 1; display: flex; min-height: 0; background: #222933; }
.palettes { width: 25px; padding: 5px 2px 4px 1px; display: flex; flex-direction: column; gap: 5px; }
.palettes.right { padding: 5px 0 4px 3px; }
.palettes button {
  flex: 1; min-height: 0; writing-mode: vertical-rl; transform: rotate(180deg); white-space: nowrap; color: #eef0f2;
  background: repeating-linear-gradient(90deg, #c5cad2 0 1px, #0000 1px 2px) 50% calc(100% - 3px) / 9px 1px no-repeat,
    repeating-linear-gradient(90deg, #c5cad2 0 1px, #0000 1px 2px) 50% calc(100% - 5px) / 9px 1px no-repeat, #3b4453;
}
.palettes button:first-child, .palettes button:nth-child(2) { font-size: 11px; }
.center { flex: 1; display: flex; flex-direction: column; min-width: 0; }
.canvas { flex: 1; background: #000; position: relative; overflow: hidden; }
.grid { position: absolute; inset: 0; }
.vp { position: absolute; left: 4px; top: 5px; color: #fff; font-family: "Liberation Sans", sans-serif; }
.ucs { position: absolute; left: 15px; bottom: 14px; }
.cube { position: absolute; right: 0; top: 6px; overflow: visible; width: 84px; height: 112px; }
.cube-t { font: 700 12px "Liberation Sans", sans-serif; fill: #a8a8a8; text-anchor: middle; }
.cube-t .top { font-size: 8px; fill: #444b55; }
.cmd { height: 38px; display: flex; border-top: 4px solid #3b4453; }
.cmd-tools { width: 58px; background: #2b313c; display: flex; align-items: center; padding: 0 6px 0 4px; justify-content: space-between; }
.grip { width: 5px; height: 18px; background: repeating-linear-gradient(#b9bec7 0 1px, #2b313c 1px 3px); }
.cmd-line { flex: 1; background: #fff; margin: 1px 1px 0 0; display: flex; align-items: center; gap: 2px; padding-left: 4px; border-radius: 2px; }
.cmd-line input { flex: 1; border: 0; background: none; padding: 0 3px; color: #333; font: italic 12px/16px "Liberation Mono", monospace; }
.cmd-line input::placeholder { color: #777; }

/* status bar */
.status { height: 34px; border-top: 5px solid #3b4453; background: #222933; display: flex; justify-content: space-between; font-size: 11px; }
.status .strip-tabs { height: 24px; }
.status .strip-tabs .slant { margin-right: 8px; }
.status i { color: #5a6270; font-size: 18px; padding: 0 9px; }
.modes { display: flex; gap: 3px; padding: 2px 0 4px; }
.g { display: flex; background: #333b49; }
.g button { width: 24px; display: flex; align-items: center; justify-content: center; color: #d9dadc; }
.g .n { width: 16px; }
.g .on { background: #5b8cc4; color: #fff; width: 22px; }
.g .gapped { margin-left: 2px; }
.g .txt { width: auto; padding: 0 3px; }
.g .wide { width: 30px; }

/* taskbar */
.taskbar { height: 48px; background: #2a2a2a; border-top: 1px solid #484848; display: flex; justify-content: space-between; padding: 0 19px 0 11px; }
.apps { display: flex; }
.apps button { width: 32px; display: flex; align-items: center; justify-content: center; position: relative; }
.gr { color: #8d99a8; }
.apps .run::after { content: ""; position: absolute; bottom: 5px; width: 4px; height: 3px; border-radius: 2px; background: #9a9a9a; }
.apps .act { border-radius: 4px; background: linear-gradient(#383838, #383838) center / 24px 40px no-repeat; }
.apps .act::after { width: 11px; background: #1d93f5; }
.tray { display: flex; align-items: center; gap: 16px; color: #fff; text-align: right; }
.tray svg:nth-of-type(5) { margin-left: -9px; }
.tray svg:nth-of-type(6) { margin-left: -5px; }

/* dialog */
.dialog { position: absolute; left: 177px; right: 137px; top: 109px; bottom: 188px; background: #efefef; color: #000; border-radius: 8px; display: flex; flex-direction: column; overflow: hidden; box-shadow: 0 0 0 1px #4a4f58, 0 4px 30px #0006; }
.dlg-head { height: 30px; background: #f3f3f3; display: flex; align-items: center; padding: 0 18px 0 11px; gap: 36px; }
.dlg-head h2 { flex: 1; margin-left: -29px; }
.dlg-body { flex: 1; min-height: 0; display: grid; grid-template-columns: 220px 220px 340px minmax(0, 1fr); column-gap: 20px; padding: 0 10px 10px; font-size: 11px; }
.details, .info { margin: 0 10px 0 -10px; }
.view { margin-left: -10px; }
.filters, .details, .view { display: flex; flex-direction: column; min-height: 0; }
.filters h3, .details h3 { height: 29px; line-height: 29px; text-align: center; }
.box { border: 1px solid #b0b0b0; }
.btn { height: 21px; background: #fdfdfd; border: 1px solid #d0d0d0; border-bottom-color: #b5b5b5; border-radius: 4px; line-height: 18px; width: 73px; }
.btn:disabled { color: #a0a0a0; background: #f6f6f6; border-color: #e4e4e4; }

.filters .box { height: 101px; padding: 11px 9px 0; }
.pair { display: grid; grid-template-columns: 1fr 1fr; gap: 12px; padding: 0 1px; margin-bottom: 11px; }
.pair .btn { width: auto; }
.combo { display: flex; align-items: center; height: 21px; background: #fdfdfd; border: 1px solid #d3d3d3; border-bottom-color: #b5b5b5; border-radius: 2px; padding: 0 3px; margin-bottom: 9px; color: #444; }
.combo select { flex: 1; appearance: none; border: 0; background: none; padding: 0; color: #000; }
.combo.off { background: #f6f6f6; border-color: #e4e4e4; color: #aaa; }
.combo.off select { color: #808080; opacity: 1; }
.taglist { flex: 1; min-height: 0; display: flex; margin: 5px 0 10px; }
.tags { width: 194px; border-right: 1px solid #fff; padding: 3px 0 0 18px; display: flex; flex-direction: column; gap: 6px; align-items: flex-start; overflow: hidden; }
.tag { flex: none; height: 28px; display: flex; align-items: center; padding: 0 8px 2px; gap: 7px; white-space: nowrap; }
.tag svg, .chip svg { width: 15px; height: 15px; }
.tag input { appearance: none; width: 13px; height: 13px; border: 1px solid #555; border-radius: 3px; background: #f6f6f6; }
.tag .switch { width: 27px; height: 14px; border: 0; border-radius: 7px; background: radial-gradient(circle at 7px 7px, #fff 5px, #0000 6px), #b0b0b0; }
.sys { display: flex; align-items: center; gap: 7px; flex: none; }
.sys em { color: #555; font-size: 10px; }
.taglist .bar { width: 2px; height: 133px; background: #808080; margin: 17px 0 0 7px; border-radius: 1px; }
.c-amber { background: #f5a855; } .c-blue { background: #8db4e7; } .c-yellow { background: #f0dc96; } .c-red { background: #f0a0a5; }
.c-violet { background: #e6b4f0; } .c-green { background: #a0e3bc; } .c-pink { background: #f0b4d2; } .c-sky { background: #9bc7e8; }
.c-orange { background: #f0b47a; } .c-indigo { background: #b4bee8; }

.details .box { height: 71px; padding: 10px 7px 0 9px; color: #666; }
.details input { width: 100%; height: 20px; border: 1px solid #e4e4e4; border-bottom-color: #777; background: #fff; padding: 0 2px; }
.details input::placeholder { color: #757575; }
.details .box p { padding: 17px 0 0 1px; }
.rows { flex: 1; min-height: 0; display: flex; border: solid #b0b0b0; border-width: 0 1px; }
.rows ul { width: 202px; overflow: hidden; border-right: 1px solid #fff; }
.rows li { display: flex; height: 41px; border-bottom: 1px solid #b0b0b0; background: linear-gradient(90deg, #fff 40px, #0000 40px); position: relative; }
.rows li svg { width: 31px; height: 31px; border: 1px solid #aaa; margin: 5px 4px 0 5px; background: #fff; }
.rows a { flex: 1; padding: 4px 0 0 6px; font-size: 10px; line-height: 15px; white-space: nowrap; overflow: hidden; }
.rows b { display: block; font-weight: 400; font-size: 11px; }
.sel a { background: #39f; color: #fff; }
.flag::after { content: ""; position: absolute; right: 0; bottom: 0; width: 9px; height: 8px; background: linear-gradient(135deg, #0000 50%, #ffa500 50%); }
.rows .bar { width: 2px; height: 318px; background: #808080; margin: 17px 0 0 7px; border-radius: 1px; }

.info { padding-top: 28px; }
.info h2 { font-weight: 700; font-size: 15px; line-height: 24px; padding-left: 2px; white-space: nowrap; }
.kind { color: #2e86c1; line-height: 18px; padding: 2px 0 1px 2px; }
.by { padding-left: 2px; line-height: 16px; }
.info a { color: #1a66cc; }
.track { display: flex; align-items: center; gap: 4px; margin: 8px 0 11px; height: 13px; }
.track input { width: 13px; height: 13px; accent-color: #0a5eb8; }
.info h3 { display: flex; align-items: center; gap: 10px; height: 16px; padding-right: 4px; font-weight: 700; color: #555; }
.info h3::before, .info h3::after { content: ""; flex: 1; height: 1px; background: #b5b5b5; }
.info .far { margin-top: 13px; }
.add { display: block; width: 100%; height: 23px; margin: 5px 0 7px; border: 1px solid #555; background: #fff; padding: 0 0 4px; }
.add::placeholder { color: #757575; }
.chips { display: flex; flex-wrap: wrap; gap: 6px; }
.chip { height: 24px; display: flex; align-items: center; padding: 0 8px 0 12px; gap: 6px; white-space: nowrap; }
.chip button { width: 9px; margin-right: 3px; color: #555; font-size: 10px; }
.desc, .log { line-height: 13px; padding: 0 3px; margin-top: 4px; }
.desc { min-height: 68px; }
.log { min-height: 76px; }
.version { margin: 3px 0 0 -4px; min-height: 51px; background: #cfdde6; border-left: 2px solid #2e86c1; padding: 1px 5px; }
.version b { color: #2e86c1; display: block; }
.version small { font-size: 10px; }
.version p { font-size: 10px; padding: 0 0 0 10px; }

.toolbar { height: 30px; display: flex; justify-content: flex-end; align-items: center; gap: 9px; padding: 0 6px 2px 0; }
.toolbar button { display: flex; align-items: center; gap: 4px; }
.toolbar i { width: 16px; height: 16px; }
.s1 { background: #32cd32; } .s2 { background: #00bcd4; } .s3 { background: #808080; } .s4 { background: #2e8b57; }
.preview { flex: 1; min-height: 0; background: #fff; border: 1px solid #b0b0b0; position: relative; }
.sheet { width: 100%; height: 100%; }
.badge { position: absolute; left: 0; top: 0; width: 129px; height: 34px; background: #dcdcdc; color: #2a8fd4; font: italic 700 18px/34px "Open Sans", sans-serif; padding-left: 9px; }
.handle { position: absolute; right: 7px; top: 266px; width: 20px; height: 136px; border-radius: 5px; background: #5a5a5c; color: #fff; font-weight: 700; }
.actions { display: flex; gap: 12px; padding: 20px 11px 9px 17px; }
.close { margin-left: auto; }

.cad { font: 10px Roboto, sans-serif; fill: #4a4a4a; }
.hl { fill: #85853a; }
.name { font: 20px Roboto, sans-serif; fill: #555; }
.scale { font: 8px Roboto, sans-serif; fill: #444; }
.tiny { font: 700 5px "Liberation Sans", sans-serif; fill: #111; }
.note { font: 700 12px "Open Sans", sans-serif; fill: #f00; }
.num { font: 700 12px "Liberation Sans", sans-serif; fill: #f00; }
```
